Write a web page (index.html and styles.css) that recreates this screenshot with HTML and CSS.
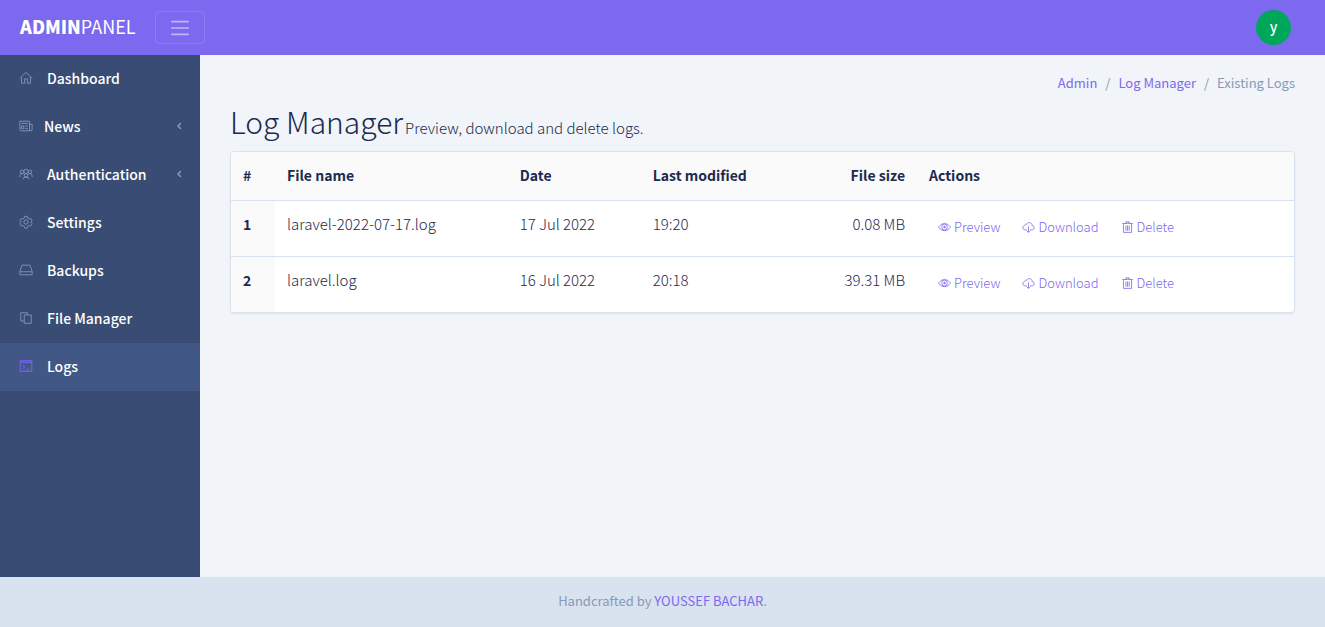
FILE: index.html
```html
<!DOCTYPE html>
<html lang="en">
<head>
<meta charset="utf-8">
<title>Existing Logs</title>
<link rel="stylesheet" href="styles.css">
</head>
<body>
<svg class="sprite" aria-hidden="true">
  <symbol id="i-home" viewBox="0 0 32 32"><path d="M2 17 16 3l14 14M6 14v14h7V18h6v10h7V14"/></symbol>
  <symbol id="i-news" viewBox="0 0 32 32"><path d="M2 5h22v22H5q-3 0-3-3zM24 12h6v12q0 3-3 3t-3-3M6 10h14M6 16h5v6H6zM14 16h6M14 22h6"/></symbol>
  <symbol id="i-users" viewBox="0 0 32 32"><circle cx="7" cy="11" r="4"/><circle cx="25" cy="11" r="4"/><circle cx="16" cy="10" r="5"/><circle cx="16" cy="19" r="4"/><path d="M2 23v-3q0-5 5-5 3 0 4 2M30 23v-3q0-5-5-5-3 0-4 2M9 28q0-5 7-5t7 5"/></symbol>
  <symbol id="i-cog" viewBox="0 0 32 32"><path d="M13 3h6l1 4 3 2 4-1 3 5-3 3 3 4-3 5-4-1-3 2-1 4h-6l-1-4-3-2-4 1-3-5 3-4-3-3 3-5 4 1 3-2z"/><circle cx="16" cy="16" r="5"/></symbol>
  <symbol id="i-drive" viewBox="0 0 32 32"><path d="M7 5h18l5 14v8H2v-8zM2 20h28"/></symbol>
  <symbol id="i-files" viewBox="0 0 32 32"><path d="M12 23H4V4h15v5M12 9h16v19H12z"/></symbol>
  <symbol id="i-terminal" viewBox="0 0 32 32"><path d="M3 4h26v24H3zM3 8h26M9 14l4 4-4 4M16 23h8"/></symbol>
  <symbol id="i-eye" viewBox="0 0 32 32"><path d="M1 15q6-9 15-9t15 9q-6 9-15 9T1 15z"/><circle cx="16" cy="15" r="7"/><circle class="dot" cx="16" cy="15" r="2"/></symbol>
  <symbol id="i-cloud" viewBox="0 0 32 32"><path d="M12 22H8c-4 0-6-3-6-5 0-4 3-6 5-6 0-3 3-4 5-3 1-3 3-4 6-4 5 0 7 4 7 7 3 0 5 3 5 6s-2 5-6 5h-4M16 14v14M12 24l4 4 4-4"/></symbol>
  <symbol id="i-trash" viewBox="0 0 32 32"><path d="M3 6h26M12 6V2h8v4M6 6v22h20V6M12 11v13M16 11v13M20 11v13"/></symbol>
  <symbol id="i-chevron" viewBox="0 0 8 8"><path d="M5 1 2 4l3 3"/></symbol>
  <symbol id="i-menu" viewBox="0 0 30 30"><path d="M4 7h22M4 15h22M4 23h22"/></symbol>
</svg>
<header class="topbar">
  <a class="brand" href="#"><b>ADMIN</b>PANEL</a>
  <button class="toggler" type="button" aria-label="Toggle navigation"><svg class="menu-icon"><use href="#i-menu"/></svg></button>
  <button class="avatar" type="button">y</button>
</header>
<div class="shell">
  <nav class="sidebar">
    <a class="nav-link" href="#"><svg class="nav-icon"><use href="#i-home"/></svg>Dashboard</a>
    <a class="nav-link nav-group" href="#"><svg class="nav-icon"><use href="#i-news"/></svg>News<svg class="chevron"><use href="#i-chevron"/></svg></a>
    <a class="nav-link" href="#"><svg class="nav-icon"><use href="#i-users"/></svg>Authentication<svg class="chevron"><use href="#i-chevron"/></svg></a>
    <a class="nav-link" href="#"><svg class="nav-icon"><use href="#i-cog"/></svg>Settings</a>
    <a class="nav-link" href="#"><svg class="nav-icon"><use href="#i-drive"/></svg>Backups</a>
    <a class="nav-link" href="#"><svg class="nav-icon"><use href="#i-files"/></svg>File Manager</a>
    <a class="nav-link active" href="#"><svg class="nav-icon"><use href="#i-terminal"/></svg>Logs</a>
  </nav>
  <main class="content">
    <nav class="breadcrumb" aria-label="Breadcrumb"><a href="#">Admin</a><span>/</span><a href="#">Log Manager</a><span>/</span><span>Existing Logs</span></nav>
    <div class="heading"><h1>Log Manager</h1><p>Preview, download and delete logs.</p></div>
    <div class="card">
      <table class="logs">
        <colgroup><col class="c-num"><col class="c-name"><col class="c-date"><col class="c-mod"><col class="c-size"><col></colgroup>
        <thead><tr><th>#</th><th>File name</th><th>Date</th><th>Last modified</th><th class="right">File size</th><th>Actions</th></tr></thead>
        <tbody>
          <tr><th scope="row">1</th><td>laravel-2022-07-17.log</td><td>17 Jul 2022</td><td>19:20</td><td class="right">0.08 MB</td>
            <td><div class="actions"><a href="#"><svg><use href="#i-eye"/></svg>Preview</a><a href="#"><svg><use href="#i-cloud"/></svg>Download</a><a href="#"><svg><use href="#i-trash"/></svg>Delete</a></div></td></tr>
          <tr><th scope="row">2</th><td>laravel.log</td><td>16 Jul 2022</td><td>20:18</td><td class="right">39.31 MB</td>
            <td><div class="actions"><a href="#"><svg><use href="#i-eye"/></svg>Preview</a><a href="#"><svg><use href="#i-cloud"/></svg>Download</a><a href="#"><svg><use href="#i-trash"/></svg>Delete</a></div></td></tr>
        </tbody>
      </table>
    </div>
  </main>
</div>
<footer class="footer"><p>Handcrafted by <a href="#">YOUSSEF BACHAR</a>.</p></footer>
</body>
</html>
```
FILE: styles.css
```css
* { box-sizing: border-box; }
body {
  margin: 0;
  min-height: 100vh;
  display: flex;
  flex-direction: column;
  background: #f1f4f8;
  color: #1b2a4e;
  font: 14px/24px "Noto Sans CJK SC", "Noto Sans", sans-serif;
}
a { color: #7c69ef; text-decoration: none; }
svg { fill: none; stroke: currentColor; stroke-width: 3; flex: none; }
.dot { fill: currentColor; }
.sprite { display: none; }

.topbar {
  display: flex;
  align-items: center;
  height: 55px;
  padding: 0 34px 0 20px;
  background: #7c69ef;
}
.brand { padding-bottom: 3px; color: #fff; font-size: 17px; width: 135px; }
.brand b { font-weight: 900; }
.brand { font-size: 18px; }
.toggler {
  display: flex;
  justify-content: center;
  align-items: center;
  width: 50px;
  height: 33px;
  padding: 0;
  border: 1px solid #8e7df2;
  border-radius: 4px;
  background: none;
  color: #c0b6f8;
}
.menu-icon { width: 24px; height: 24px; stroke-width: 2; }
.avatar {
  width: 35px;
  height: 35px;
  margin-left: auto;
  padding: 0 0 3px;
  border: 0;
  border-radius: 50%;
  background: #00a65a;
  color: #fff;
  font: 500 14px/24px "Noto Sans CJK SC", sans-serif;
}

.shell { display: flex; flex: 1; }
.sidebar { width: 200px; flex: none; background: #384c74; }
.nav-link {
  display: flex;
  align-items: center;
  height: 48px;
  padding: 0 16px 2px 19px;
  color: #fff;
  font-weight: 500;
}
.nav-icon { width: 14px; height: 14px; margin-right: 14px; color: #869ab8; stroke-width: 2; }
.nav-group .nav-icon { margin-right: 11px; }
.chevron { width: 8px; height: 8px; margin-left: auto; color: #869ab8; stroke-width: 1.5; }
.active { background: #415785; }
.active .nav-icon { color: #6a60e0; stroke-width: 3; }

.content { flex: 1; padding: 16px 30px; }
.breadcrumb {
  display: flex;
  justify-content: flex-end;
  gap: 8px;
  font-size: 13px;
  color: #869ab8;
}
.heading { display: flex; align-items: baseline; gap: 2px; margin: 6px 0 10px; }
.heading h1 { margin: 0; font-size: 30px; line-height: 40px; font-weight: 300; }
.heading p { margin: 0; font-size: 15px; font-weight: 300; }
.card {
  overflow: hidden;
  border: 1px solid #d9e2ef;
  border-radius: 4px;
  background: #fff;
  box-shadow: 0 1px 2px rgba(27, 42, 78, .08);
}
.logs { width: 100%; table-layout: fixed; border-collapse: separate; border-spacing: 0; }
.logs th, .logs td { padding: 11px 12px 13px; text-align: left; vertical-align: top; }
.logs th { background: #fafafa; font-weight: 700; }
.logs td { font-size: 15px; font-weight: 300; }
.logs .right { text-align: right; }
.logs tbody tr { height: 56px; }
.logs tbody th, .logs tbody td { border-top: 1px solid #d9e2ef; }
.c-num { width: 44px; }
.c-name { width: 21.9%; }
.c-date { width: 12.5%; }
.c-mod { width: 13.5%; }
.c-size { width: 12.5%; }
.actions { display: flex; gap: 22px; padding: 3px 9px 0; font-size: 13px; }
.actions a { display: flex; align-items: center; gap: 3px; }
.actions svg { width: 13px; height: 13px; stroke-width: 2; }

.footer {
  height: 50px;
  padding: 12px;
  background: #d9e2ef;
  color: #869ab8;
  font-size: 13px;
  text-align: center;
}
.footer p { margin: 0; }
```
